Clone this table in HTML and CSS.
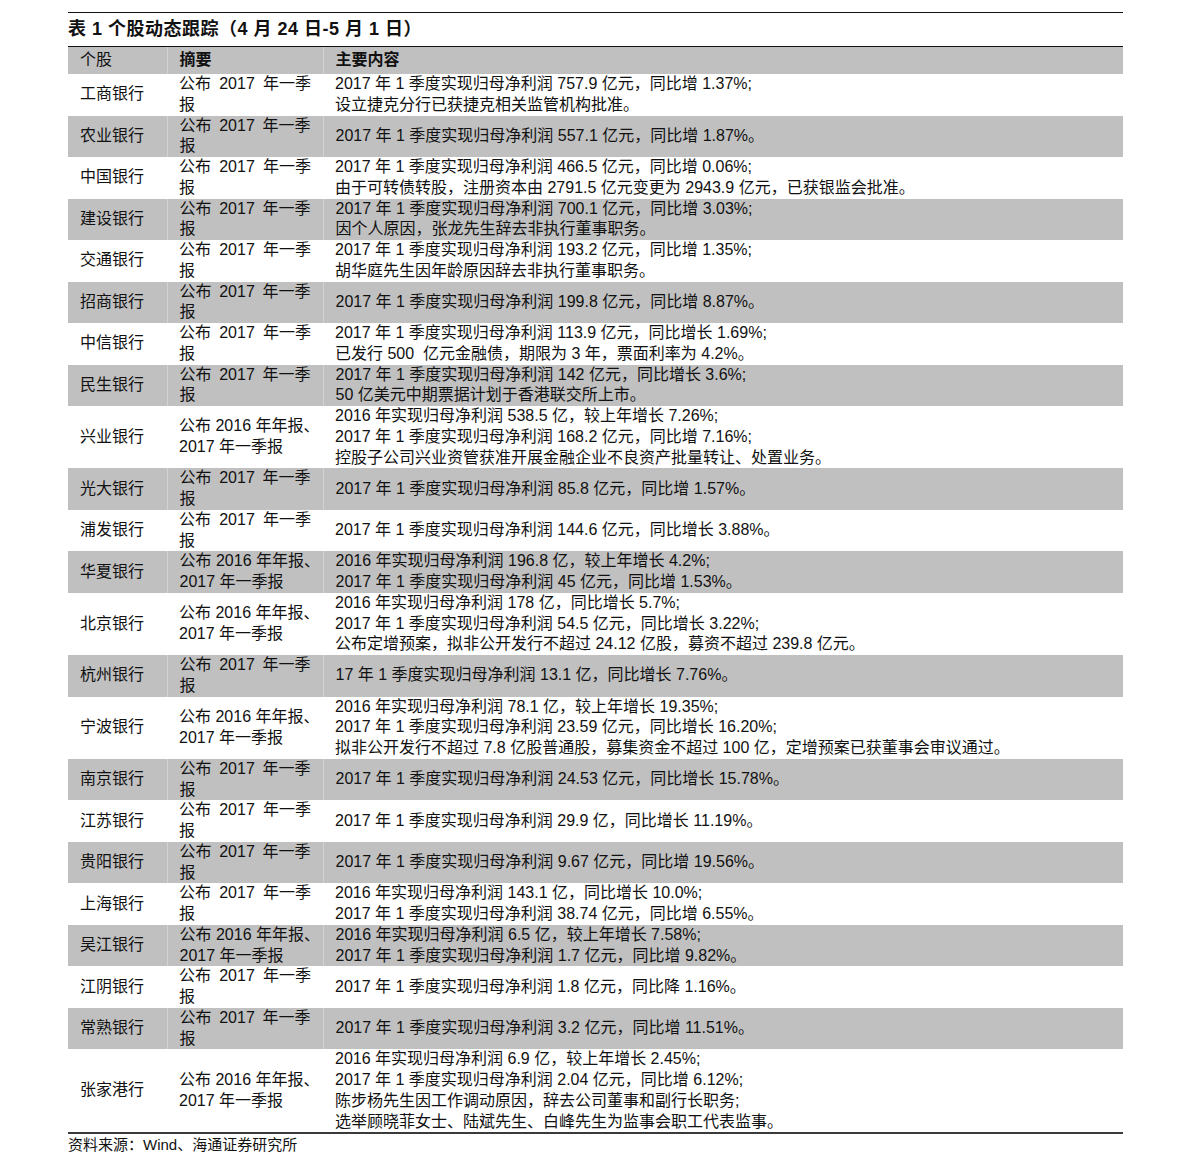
FILE: index.html
```html
<!DOCTYPE html>
<html lang="zh-CN">
<head>
<meta charset="utf-8">
<title>个股动态跟踪</title>
<link rel="stylesheet" href="styles.css">
</head>
<body>
<div class="page">
  <div class="title">表 1 个股动态跟踪（4 月 24 日-5 月 1 日）</div>
  <table class="tbl">
    <colgroup><col class="c1"><col class="c2"><col class="c3"></colgroup>
    <thead>
      <tr class="g"><th class="n">个股</th><th>摘要</th><th>主要内容</th></tr>
    </thead>
    <tbody>
      <tr><td class="name">工商银行</td><td class="sum"><div class="j"><span>公布</span><span>2017</span><span>年一季</span></div>报</td><td class="txt">2017 年 1 季度实现归母净利润 757.9 亿元，同比增 1.37%;<br>设立捷克分行已获捷克相关监管机构批准。</td></tr>
      <tr class="g"><td class="name">农业银行</td><td class="sum"><div class="j"><span>公布</span><span>2017</span><span>年一季</span></div>报</td><td class="txt">2017 年 1 季度实现归母净利润 557.1 亿元，同比增 1.87%。</td></tr>
      <tr><td class="name">中国银行</td><td class="sum"><div class="j"><span>公布</span><span>2017</span><span>年一季</span></div>报</td><td class="txt">2017 年 1 季度实现归母净利润 466.5 亿元，同比增 0.06%;<br>由于可转债转股，注册资本由 2791.5 亿元变更为 2943.9 亿元，已获银监会批准。</td></tr>
      <tr class="g"><td class="name">建设银行</td><td class="sum"><div class="j"><span>公布</span><span>2017</span><span>年一季</span></div>报</td><td class="txt">2017 年 1 季度实现归母净利润 700.1 亿元，同比增 3.03%;<br>因个人原因，张龙先生辞去非执行董事职务。</td></tr>
      <tr><td class="name">交通银行</td><td class="sum"><div class="j"><span>公布</span><span>2017</span><span>年一季</span></div>报</td><td class="txt">2017 年 1 季度实现归母净利润 193.2 亿元，同比增 1.35%;<br>胡华庭先生因年龄原因辞去非执行董事职务。</td></tr>
      <tr class="g"><td class="name">招商银行</td><td class="sum"><div class="j"><span>公布</span><span>2017</span><span>年一季</span></div>报</td><td class="txt">2017 年 1 季度实现归母净利润 199.8 亿元，同比增 8.87%。</td></tr>
      <tr><td class="name">中信银行</td><td class="sum"><div class="j"><span>公布</span><span>2017</span><span>年一季</span></div>报</td><td class="txt">2017 年 1 季度实现归母净利润 113.9 亿元，同比增长 1.69%;<br>已发行 500&nbsp; 亿元金融债，期限为 3 年，票面利率为 4.2%。</td></tr>
      <tr class="g"><td class="name">民生银行</td><td class="sum"><div class="j"><span>公布</span><span>2017</span><span>年一季</span></div>报</td><td class="txt">2017 年 1 季度实现归母净利润 142 亿元，同比增长 3.6%;<br>50 亿美元中期票据计划于香港联交所上市。</td></tr>
      <tr><td class="name">兴业银行</td><td class="sum nw">公布 2016 年年报、<br>2017 年一季报</td><td class="txt">2016 年实现归母净利润 538.5 亿，较上年增长 7.26%;<br>2017 年 1 季度实现归母净利润 168.2 亿元，同比增 7.16%;<br>控股子公司兴业资管获准开展金融企业不良资产批量转让、处置业务。</td></tr>
      <tr class="g"><td class="name">光大银行</td><td class="sum"><div class="j"><span>公布</span><span>2017</span><span>年一季</span></div>报</td><td class="txt">2017 年 1 季度实现归母净利润 85.8 亿元，同比增 1.57%。</td></tr>
      <tr><td class="name">浦发银行</td><td class="sum"><div class="j"><span>公布</span><span>2017</span><span>年一季</span></div>报</td><td class="txt">2017 年 1 季度实现归母净利润 144.6 亿元，同比增长 3.88%。</td></tr>
      <tr class="g"><td class="name">华夏银行</td><td class="sum nw">公布 2016 年年报、<br>2017 年一季报</td><td class="txt">2016 年实现归母净利润 196.8 亿，较上年增长 4.2%;<br>2017 年 1 季度实现归母净利润 45 亿元，同比增 1.53%。</td></tr>
      <tr><td class="name">北京银行</td><td class="sum nw">公布 2016 年年报、<br>2017 年一季报</td><td class="txt">2016 年实现归母净利润 178 亿，同比增长 5.7%;<br>2017 年 1 季度实现归母净利润 54.5 亿元，同比增长 3.22%;<br>公布定增预案，拟非公开发行不超过 24.12 亿股，募资不超过 239.8 亿元。</td></tr>
      <tr class="g"><td class="name">杭州银行</td><td class="sum"><div class="j"><span>公布</span><span>2017</span><span>年一季</span></div>报</td><td class="txt">17 年 1 季度实现归母净利润 13.1 亿，同比增长 7.76%。</td></tr>
      <tr><td class="name">宁波银行</td><td class="sum nw">公布 2016 年年报、<br>2017 年一季报</td><td class="txt">2016 年实现归母净利润 78.1 亿，较上年增长 19.35%;<br>2017 年 1 季度实现归母净利润 23.59 亿元，同比增长 16.20%;<br>拟非公开发行不超过 7.8 亿股普通股，募集资金不超过 100 亿，定增预案已获董事会审议通过。</td></tr>
      <tr class="g"><td class="name">南京银行</td><td class="sum"><div class="j"><span>公布</span><span>2017</span><span>年一季</span></div>报</td><td class="txt">2017 年 1 季度实现归母净利润 24.53 亿元，同比增长 15.78%。</td></tr>
      <tr><td class="name">江苏银行</td><td class="sum"><div class="j"><span>公布</span><span>2017</span><span>年一季</span></div>报</td><td class="txt">2017 年 1 季度实现归母净利润 29.9 亿，同比增长 11.19%。</td></tr>
      <tr class="g"><td class="name">贵阳银行</td><td class="sum"><div class="j"><span>公布</span><span>2017</span><span>年一季</span></div>报</td><td class="txt">2017 年 1 季度实现归母净利润 9.67 亿元，同比增 19.56%。</td></tr>
      <tr><td class="name">上海银行</td><td class="sum"><div class="j"><span>公布</span><span>2017</span><span>年一季</span></div>报</td><td class="txt">2016 年实现归母净利润 143.1 亿，同比增长 10.0%;<br>2017 年 1 季度实现归母净利润 38.74 亿元，同比增 6.55%。</td></tr>
      <tr class="g"><td class="name">吴江银行</td><td class="sum nw">公布 2016 年年报、<br>2017 年一季报</td><td class="txt">2016 年实现归母净利润 6.5 亿，较上年增长 7.58%;<br>2017 年 1 季度实现归母净利润 1.7 亿元，同比增 9.82%。</td></tr>
      <tr><td class="name">江阴银行</td><td class="sum"><div class="j"><span>公布</span><span>2017</span><span>年一季</span></div>报</td><td class="txt">2017 年 1 季度实现归母净利润 1.8 亿元，同比降 1.16%。</td></tr>
      <tr class="g"><td class="name">常熟银行</td><td class="sum"><div class="j"><span>公布</span><span>2017</span><span>年一季</span></div>报</td><td class="txt">2017 年 1 季度实现归母净利润 3.2 亿元，同比增 11.51%。</td></tr>
      <tr class="last"><td class="name">张家港行</td><td class="sum nw">公布 2016 年年报、<br>2017 年一季报</td><td class="txt">2016 年实现归母净利润 6.9 亿，较上年增长 2.45%;<br>2017 年 1 季度实现归母净利润 2.04 亿元，同比增 6.12%;<br>陈步杨先生因工作调动原因，辞去公司董事和副行长职务;<br>选举顾晓菲女士、陆斌先生、白峰先生为监事会职工代表监事。</td></tr>
    </tbody>
  </table>
  <div class="source">资料来源：Wind、海通证券研究所</div>
</div>
</body>
</html>
```

FILE: styles.css
```css
html, body {
  margin: 0;
  padding: 0;
  background: #ffffff;
}

body {
  font-family: "Liberation Sans", "Noto Sans CJK SC", sans-serif;
  color: #111111;
}

.page {
  width: 1055px;
  margin-left: 68px;
  padding-top: 12px;
}

.title {
  border-top: 1px solid #111111;
  padding-top: 6px;
  height: 27px;
  font-size: 18px;
  font-weight: bold;
  line-height: 21px;
  letter-spacing: 0.5px;
  white-space: nowrap;
}

.tbl {
  width: 1055px;
  border-collapse: collapse;
  table-layout: fixed;
  font-size: 16px;
  line-height: 20.75px;
}

.c1 { width: 99px; }
.c2 { width: 156px; }
.c3 { width: 800px; }

.tbl th {
  text-align: left;
  font-weight: bold;
  padding: 3px 12px;
  height: 21px;
  border-top: 1px solid #111111;
}

.tbl th.n {
  font-weight: normal;
}

.tbl td {
  padding: 0 12px;
  vertical-align: middle;
  white-space: nowrap;
}

.tbl td.sum {
  white-space: normal;
}

.tbl td.sum.nw {
  white-space: nowrap;
  overflow: visible;
}

.tbl tr.g {
  background: #c0c0c0;
}

.tbl tr.g td + td,
.tbl tr.g th + th {
  border-left: 1px solid #d2d2d2;
}

.tbl tr.last td {
  border-bottom: 2px solid #3a3a3a;
}

.j {
  display: flex;
  justify-content: space-between;
}

.source {
  font-size: 15px;
  line-height: 20px;
  padding-top: 1px;
  color: #111111;
}
```
